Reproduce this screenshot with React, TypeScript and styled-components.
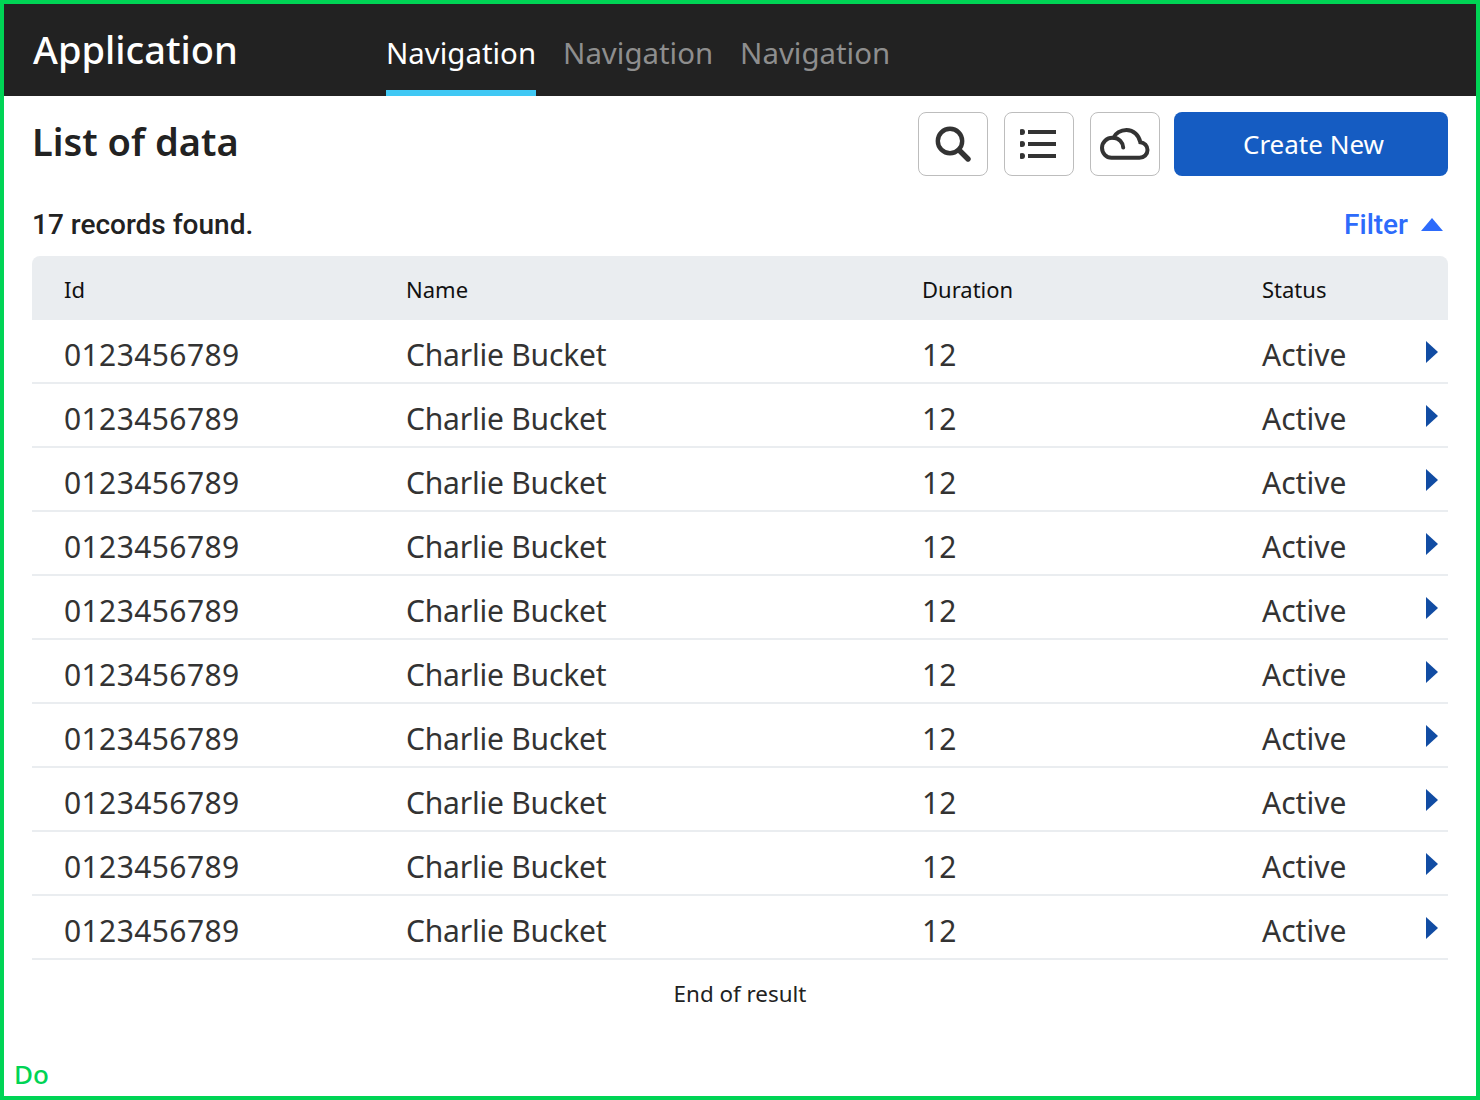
import { FunctionComponent } from 'react';
import styled, { createGlobalStyle } from 'styled-components';

const GlobalStyle = createGlobalStyle`
    html, body {
        margin: 0;
        padding: 0;
        background: #fff;
    }
    * {
        box-sizing: border-box;
    }
`;

const Frame = styled.div`
    width: 1480px;
    height: 1100px;
    border: 4px solid #00d455;
    display: flex;
    flex-direction: column;
    font-family: 'Noto Sans', sans-serif;
    color: #333;
`;

const Header = styled.header`
    height: 92px;
    background: #222;
    display: flex;
    padding-left: 29px;
`;

const Brand = styled.div`
    width: 353px;
    font-size: 38px;
    font-weight: 500;
    line-height: 90px;
    color: #fff;
`;

const Nav = styled.nav`
    display: flex;
    gap: 27px;
`;

const NavItem = styled.a<{ $active?: boolean }>`
    height: 92px;
    line-height: 98px;
    font-size: 29.4px;
    color: ${({ $active }) => ($active ? '#fff' : '#8e8e8e')};
    border-bottom: 6px solid ${({ $active }) => ($active ? '#40c8f4' : 'transparent')};
`;

const Main = styled.main`
    flex: 1;
    padding: 16px 28px 0;
    display: flex;
    flex-direction: column;
`;

const TitleRow = styled.div`
    display: flex;
    justify-content: space-between;
    height: 64px;
`;

const Title = styled.h1`
    margin: 0;
    font-size: 38px;
    font-weight: 600;
    line-height: 58px;
    color: #222;
`;

const Actions = styled.div`
    display: flex;
`;

const IconButton = styled.button`
    width: 70px;
    height: 64px;
    margin-right: 16px;
    padding: 0;
    background: #fff;
    border: 1px solid #bdbdbd;
    border-radius: 8px;
    display: flex;
    align-items: center;
    justify-content: center;
`;

const CreateButton = styled.button`
    width: 274px;
    height: 64px;
    margin-left: -2px;
    padding: 0 0 0 5px;
    background: #155cc2;
    border: 0;
    border-radius: 8px;
    color: #fff;
    font-family: 'Noto Sans', sans-serif;
    font-size: 26px;
`;

const SummaryRow = styled.div`
    display: flex;
    justify-content: space-between;
    align-items: center;
    height: 80px;
    padding-top: 16px;
`;

const Count = styled.div`
    font-family: Roboto, sans-serif;
    font-size: 28px;
    font-weight: 500;
    color: #222;
`;

const FilterToggle = styled.a`
    display: flex;
    align-items: center;
    gap: 13px;
    padding-right: 5px;
    font-family: Roboto, sans-serif;
    font-size: 28px;
    font-weight: 500;
    color: #2d6bfb;
`;

const TableHead = styled.div`
    display: grid;
    grid-template-columns: 342px 516px 340px 1fr;
    align-items: center;
    height: 64px;
    padding: 2px 0 0 32px;
    background: #eaedf0;
    border-radius: 8px 8px 0 0;
    color: #111;
    font-size: 22px;
`;

const Row = styled.div`
    display: grid;
    grid-template-columns: 342px 516px 340px 1fr 22px;
    align-items: center;
    height: 64px;
    padding: 6px 0 0 32px;
    border-bottom: 2px solid #eaedf0;
    font-size: 30px;
    color: #333;
`;

const IdCell = styled.span`
    letter-spacing: 0.4px;
`;

const NameCell = styled.span`
    letter-spacing: -0.2px;
`;

const Chevron = styled.svg`
    margin-top: -4px;
`;

const EndNote = styled.div`
    margin-top: 18px;
    text-align: center;
    font-size: 22.4px;
    color: #222;
`;

const Footnote = styled.div`
    margin-top: auto;
    padding: 0 0 4px 10px;
    font-size: 26px;
    font-weight: 500;
    color: #00d455;
`;

const SearchIcon = () => (
    <svg width="36" height="36" viewBox="0 0 36 36" fill="none" stroke="#333" strokeWidth="4.4">
        <circle cx="15" cy="15" r="12.2" />
        <path d="M24 24l9 9" strokeWidth="5.4" strokeLinecap="round" />
    </svg>
);

const ListIcon = () => (
    <svg width="38" height="32" viewBox="2 0 38 32" fill="#333">
        <circle cx="4" cy="4" r="3" />
        <circle cx="4" cy="16" r="3" />
        <circle cx="4" cy="28" r="3" />
        <rect x="10" y="2" width="28" height="4" />
        <rect x="10" y="14" width="28" height="4" />
        <rect x="10" y="26" width="28" height="4" />
    </svg>
);

const CloudIcon = () => (
    <svg width="50" height="32" viewBox="0 0 50 32" fill="none" stroke="#333" strokeWidth="4" strokeLinecap="round">
        <path d="M11.5 29.8H39.5C44 29.8 47.5 26.4 47.5 22C47.5 17.8 44.3 14.5 40.3 14.2C39 7.2 33.5 2 26.5 2C20.5 2 15.5 5.5 13.4 9.8C7 9.2 2 14 2 19.8C2 25.4 6.2 29.8 11.5 29.8Z" />
        <path d="M13.4 9.8C19 10.2 23 14.5 23.2 19.5" />
    </svg>
);

const rows = Array.from({ length: 10 }, (_, i) => i);

const App: FunctionComponent = () => (
    <>
        <GlobalStyle />
        <Frame>
            <Header>
                <Brand>Application</Brand>
                <Nav>
                    <NavItem $active>Navigation</NavItem>
                    <NavItem>Navigation</NavItem>
                    <NavItem>Navigation</NavItem>
                </Nav>
            </Header>
            <Main>
                <TitleRow>
                    <Title>List of data</Title>
                    <Actions>
                        <IconButton>
                            <SearchIcon />
                        </IconButton>
                        <IconButton>
                            <ListIcon />
                        </IconButton>
                        <IconButton>
                            <CloudIcon />
                        </IconButton>
                        <CreateButton>Create New</CreateButton>
                    </Actions>
                </TitleRow>
                <SummaryRow>
                    <Count>17 records found.</Count>
                    <FilterToggle>
                        Filter
                        <svg width="22" height="13" viewBox="0 0 22 13" fill="#2d6bfb">
                            <path d="M11 0l11 13H0z" />
                        </svg>
                    </FilterToggle>
                </SummaryRow>
                <TableHead>
                    <span>Id</span>
                    <span>Name</span>
                    <span>Duration</span>
                    <span>Status</span>
                </TableHead>
                {rows.map((i) => (
                    <Row key={i}>
                        <IdCell>0123456789</IdCell>
                        <NameCell>Charlie Bucket</NameCell>
                        <span>12</span>
                        <span>Active</span>
                        <Chevron width="12" height="22" viewBox="0 0 12 22" fill="#114ca3">
                            <path d="M0 0l12 11L0 22z" />
                        </Chevron>
                    </Row>
                ))}
                <EndNote>End of result</EndNote>
            </Main>
            <Footnote>Do</Footnote>
        </Frame>
    </>
);

export default App;
